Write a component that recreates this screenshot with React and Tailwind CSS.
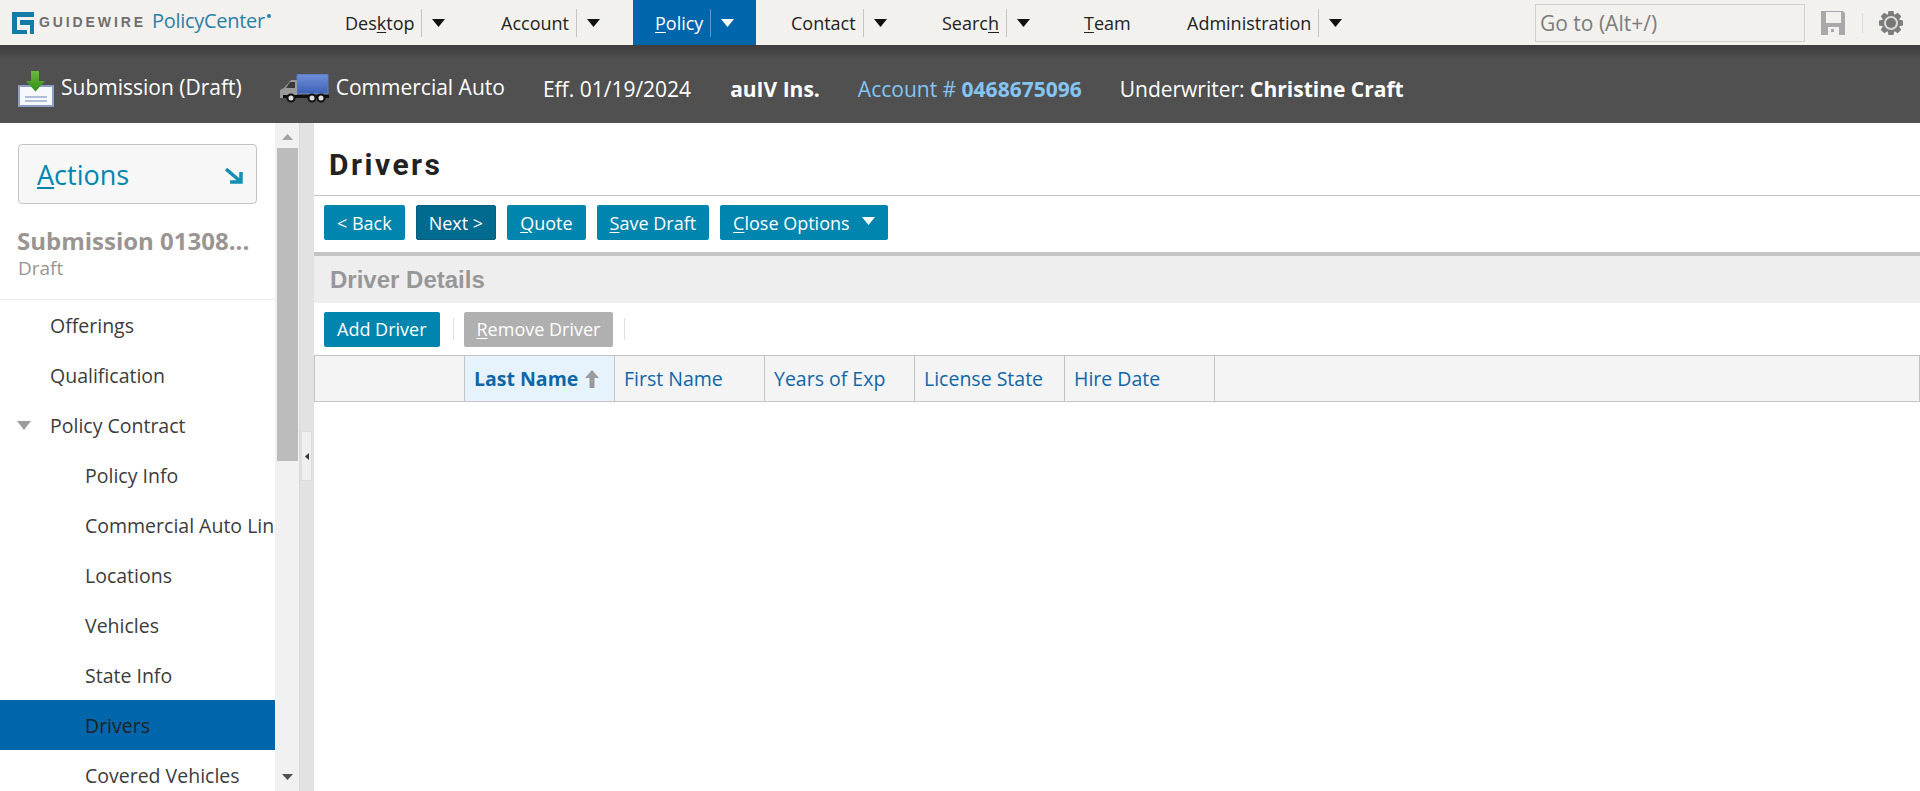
import React from 'react';

const NavItem = ({ label, u, arrow = true, active = false, className = '' }) => {
  // u = index of the underlined mnemonic letter
  const before = u === undefined ? label : label.slice(0, u);
  const mid = u === undefined ? '' : label[u];
  const after = u === undefined ? '' : label.slice(u + 1);
  return (
    <div className={`h-[45px] shrink-0 flex items-center ${active ? 'bg-[#0066ab] text-white' : 'text-[#222]'} ${className}`}>
      <span className="mt-[2px]">
        {before}
        {mid && <span className="underline underline-offset-2">{mid}</span>}
        {after}
      </span>
      {arrow && (
        <>
          <span className={`ml-[7px] h-[28px] w-px ${active ? 'bg-[#5a9ac8]' : 'bg-[#c4c4c4]'}`} />
          <Caret className={`ml-[10px] ${active ? 'fill-white' : 'fill-[#111]'}`} />
        </>
      )}
    </div>
  );
};

const Caret = ({ className = '' }) => (
  <svg width="13" height="8" viewBox="0 0 13 8" className={className}>
    <path d="M0 0h13L6.5 8z" />
  </svg>
);

const Logo = () => (
  <div className="flex items-center pl-[12px] w-[333px] shrink-0">
    <svg width="22" height="22" viewBox="0 0 22 22" className="shrink-0">
      <path fill="#127ca6" d="M0 0h22v5H5v13h10v4H0z" />
      <path fill="#127ca6" d="M8 8h14v14h-4V13H8z" />
    </svg>
    <span className="ml-[5px] text-[14px] font-bold tracking-[2.9px] text-[#6f6f6f] font-['Liberation_Sans',sans-serif]">GUIDEWIRE</span>
    <span className="ml-[6px] text-[20px] text-[#2a7fa8] tracking-[-0.3px] leading-none mb-[3px]">PolicyCenter</span>
    <span className="w-[4px] h-[4px] ml-[2px] rounded-full bg-[#2a7fa8] mb-[13px]" />
  </div>
);

const SubmissionIcon = () => (
  <svg width="37" height="36" viewBox="0 0 37 36" className="shrink-0">
    <defs>
      <linearGradient id="arrowFill" x1="0" y1="0" x2="0" y2="1">
        <stop offset="0" stopColor="#6ab83a" />
        <stop offset="1" stopColor="#2f8f14" />
      </linearGradient>
    </defs>
    <path fill="#f6f8fc" stroke="#8c9dc4" strokeWidth="2" d="M1 15h34v20H1z" />
    <path stroke="#9aaad0" strokeWidth="1.5" d="M7 26h22M7 30h22" />
    <path fill="url(#arrowFill)" d="M13 0h8v10h6l-9.500 10.500L8 10h5z" />
  </svg>
);

const TruckIcon = () => (
  <svg width="50" height="30" viewBox="0 0 50 30" className="shrink-0">
    <defs>
      <linearGradient id="box" x1="0" y1="0" x2="0" y2="1">
        <stop offset="0" stopColor="#6f8fd8" />
        <stop offset="1" stopColor="#3f62b4" />
      </linearGradient>
    </defs>
    <path fill="url(#box)" stroke="#5c7cc6" d="M18 .5h31v19H18z" />
    <path fill="#9a9a9a" d="M18 6h-6l-7 8-4 2v8h17z" />
    <path fill="#3a3a3a" d="M11 8h5v6H7z" />
    <path fill="#111" d="M4 21h46v3H4z" />
    <circle cx="12" cy="24" r="3.500" fill="#ddd" stroke="#111" strokeWidth="2" />
    <circle cx="33" cy="24" r="3.500" fill="#ddd" stroke="#111" strokeWidth="2" />
    <circle cx="42" cy="24" r="3.500" fill="#ddd" stroke="#111" strokeWidth="2" />
  </svg>
);

const SaveIcon = () => (
  <svg width="24" height="24" viewBox="0 0 24 24">
    <path fill="#a9a9a9" d="M0 0h22l2 2v22H0z" />
    <path fill="#f3f1ed" d="M5 1h15v11H5zM7 16h11v8H7z" />
    <path fill="#a9a9a9" d="M10 18h3v3h-3z" />
  </svg>
);

const GearIcon = () => (
  <svg width="24" height="24" viewBox="0 0 24 24">
    {[0, 45, 90, 135, 180, 225, 270, 315].map((deg) => (
      <path key={deg} fill="#7d7d7d" d="M9.500 0h5l1 5h-7z" transform={`rotate(${deg} 12 12)`} />
    ))}
    <circle cx="12" cy="12" r="9" fill="#7d7d7d" />
    <circle cx="12" cy="12" r="7" fill="#dcdbd7" />
    <circle cx="12" cy="12" r="5" fill="#777777" />
  </svg>
);

const SideItem = ({ label, active = false, sub = true, caret = false }) => (
  <div className={`h-[50px] pt-[1px] flex items-center whitespace-nowrap overflow-hidden text-[19.5px] ${sub ? 'pl-[85px]' : 'pl-[50px]'} ${active ? 'bg-[#0066ab] text-[#222]' : 'text-[#3c3c3c]'} relative`}>
    {caret && (
      <svg width="14" height="9" viewBox="0 0 14 9" className="absolute left-[17px] top-[21px]">
        <path fill="#9a9a9a" d="M0 0h14L7 9z" />
      </svg>
    )}
    {label}
  </div>
);

const Btn = ({ children, className = 'bg-[#0086ae]', dark = false }) => (
  <div className={`h-[35px] flex items-center rounded-[2px] text-white whitespace-nowrap ${dark ? 'px-[12px] bg-[#006b8e] border border-[#0a5f80]' : `px-[13px] ${className}`}`}>
    {children}
  </div>
);

const U = ({ children }) => <span className="underline underline-offset-2">{children}</span>;

const Th = ({ children, active = false }) => (
  <div className={`w-[150px] shrink-0 border-r border-[#c4c4c4] flex items-center pl-[9px] text-[19.5px] text-[#0f66a8] ${active ? 'bg-[#e6f3fd] font-bold' : ''}`}>
    {children}
  </div>
);

export default function App() {
  return (
    <div className="h-[791px] w-[1920px] overflow-hidden bg-white flex flex-col text-[18px] font-['Open_Sans','Noto_Sans',sans-serif]">
      {/* Top nav */}
      <div className="h-[45px] shrink-0 bg-[#f3f1ed] flex items-center">
        <Logo />
        <NavItem label="Desktop" u={3} className="w-[156px] pl-[12px]" />
        <NavItem label="Account" className="w-[144px] pl-[12px]" />
        <NavItem label="Policy" u={0} active className="w-[123px] pl-[22px]" />
        <NavItem label="Contact" className="w-[174px] pl-[35px]" />
        <NavItem label="Search" u={5} className="w-[141px] pl-[12px]" />
        <NavItem label="Team" u={0} arrow={false} className="w-[103px] pl-[13px]" />
        <NavItem label="Administration" className="w-[361px] pl-[13px]" />
        <div className="w-[270px] h-[38px] shrink-0 border border-[#cfcfcb] flex items-center pl-[4px] text-[21px] text-[#7c7c7c]">
          <span className="mt-[2px]">Go to (Alt+/)</span>
        </div>
        <div className="ml-[16px]"><SaveIcon /></div>
        <div className="ml-[17px] h-[20px] w-px bg-[#dddddd]" />
        <div className="ml-[16px]"><GearIcon /></div>
      </div>

      {/* Info bar */}
      <div className="h-[78px] shrink-0 bg-gradient-to-b from-[#3d3d3d] from-0% to-[#505050] to-[20%] flex items-center pl-[18px] pt-[10px] text-[21px] text-white whitespace-nowrap">
        <SubmissionIcon />
        <span className="ml-[6px] -mt-[2px]">Submission (Draft)</span>
        <span className="ml-[37px]"><TruckIcon /></span>
        <span className="ml-[7px] -mt-[2px]">Commercial Auto</span>
        <span className="ml-[38px] mt-[2px]">Eff. 01/19/2024</span>
        <span className="ml-[39px] mt-[2px] font-bold">auIV Ins.</span>
        <span className="ml-[38px] mt-[2px] text-[#84c5f4]">Account # <b>0468675096</b></span>
        <span className="ml-[38px] mt-[2px]">Underwriter: <b>Christine Craft</b></span>
      </div>

      <div className="flex-1 flex min-h-0">
        {/* Sidebar */}
        <div className="w-[275px] shrink-0 overflow-hidden">
          <div className="mx-[18px] mt-[21px] h-[60px] border border-[#c4c4c4] rounded-[4px] bg-[#f7f7f7] flex items-center justify-between pl-[18px] pr-[13px] text-[27px] text-[#0086ae]">
            <span className="mt-[3px]"><U>A</U>ctions</span>
            <svg width="18" height="16" viewBox="0 0 18 16" className="mt-[4px]">
              <path fill="none" stroke="#1590b4" strokeWidth="3.500" d="M1 1l14 12M16 4v10H5" />
            </svg>
          </div>
          <div className="h-[96px] border-b border-[#ededed] pl-[17px] pt-[22px] text-[#9a9492]">
            <div className="text-[24px] font-bold leading-[30px] whitespace-nowrap">Submission 01308...</div>
            <div className="text-[19px] pl-[1px] leading-[25px]">Draft</div>
          </div>
          <SideItem label="Offerings" sub={false} />
          <SideItem label="Qualification" sub={false} />
          <SideItem label="Policy Contract" sub={false} caret />
          <SideItem label="Policy Info" />
          <SideItem label="Commercial Auto Line" />
          <SideItem label="Locations" />
          <SideItem label="Vehicles" />
          <SideItem label="State Info" />
          <SideItem label="Drivers" active />
          <SideItem label="Covered Vehicles" />
        </div>

        {/* Scrollbar */}
        <div className="w-[24px] shrink-0 bg-[#f1f1f1] flex flex-col items-center">
          <svg width="11" height="6" viewBox="0 0 11 6" className="mt-[11px]"><path fill="#a3a3a3" d="M0 6h11L5.500 0z" /></svg>
          <div className="w-[21px] h-[313px] mt-[8px] bg-[#bcbcbc]" />
          <svg width="11" height="6" viewBox="0 0 11 6" className="mt-auto mb-[11px]"><path fill="#505050" d="M0 0h11L5.500 6z" /></svg>
        </div>

        {/* Splitter */}
        <div className="w-[15px] shrink-0 bg-[#e2e2e2] border-l border-[#d8d8d8] relative">
          <div className="absolute left-[1px] top-[308px] w-[11px] h-[50px] bg-[#efefef] border border-[#dcdcdc] flex items-center justify-center">
            <svg width="4" height="7" viewBox="0 0 4 7"><path fill="#333" d="M4 0v7L0 3.500z" /></svg>
          </div>
        </div>

        {/* Main */}
        <div className="flex-1 min-w-0 flex flex-col">
          <div className="h-[73px] shrink-0 border-b border-[#c4c4c4] pl-[15px] flex items-center">
            <h1 className="text-[30px] font-bold tracking-[2.5px] text-[#222] font-['Roboto',sans-serif] mt-[10px]">Drivers</h1>
          </div>
          <div className="h-[56px] shrink-0 flex items-start pt-[9px] pl-[10px] gap-[11px] [&>div]:pt-[2px]">
            <Btn>&lt; Back</Btn>
            <Btn dark>Next &gt;</Btn>
            <Btn><span><U>Q</U>uote</span></Btn>
            <Btn><span><U>S</U>ave Draft</span></Btn>
            <Btn>
              <span><U>C</U>lose Options</span>
              <Caret className="ml-[12px] mb-[5px] fill-white" />
            </Btn>
          </div>
          <div className="h-[51px] shrink-0 bg-[#eeeeee] border-t-[4px] border-[#c4c4c4] flex items-center pl-[16px] text-[24px] font-bold text-[#979797] font-['Liberation_Sans',sans-serif]">
            Driver Details
          </div>
          <div className="h-[52px] shrink-0 flex items-center pl-[10px]">
            <Btn>Add Driver</Btn>
            <span className="ml-[13px] w-px h-[22px] bg-[#e0e0e0]" />
            <Btn className="bg-[#b0b0b0] ml-[10px]"><span><U>R</U>emove Driver</span></Btn>
            <span className="ml-[11px] w-px h-[22px] bg-[#e0e0e0]" />
          </div>
          <div className="h-[47px] shrink-0 flex bg-[#f4f4f4] border border-[#c4c4c4]">
            <Th />
            <Th active>
              Last Name
              <svg width="16" height="18" viewBox="0 0 16 18" className="ml-[6px]">
                <path fill="#9a9a9a" d="M8 0l7 8h-4.500v10h-5V8H1z" />
              </svg>
            </Th>
            <Th>First Name</Th>
            <Th>Years of Exp</Th>
            <Th>License State</Th>
            <Th>Hire Date</Th>
          </div>
        </div>
      </div>
    </div>
  );
}
